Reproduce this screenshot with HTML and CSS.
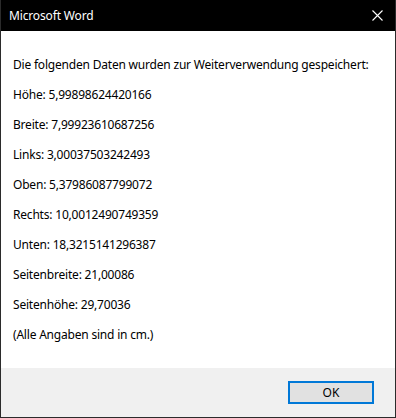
FILE: index.html
```html
<!DOCTYPE html>
<html lang="de">
<head>
    <meta charset="UTF-8">
    <meta name="viewport" content="width=device-width, initial-scale=1.0">
    <link rel="stylesheet" href="styles.css">
    <title>Microsoft Word</title>
</head>
<body>
    <div class="window">
        <!-- Titelleiste -->
        <div class="titlebar">
            <span class="title">Microsoft Word</span>
            <span class="close">
                <svg width="11" height="11" viewBox="0 0 11 11">
                    <path d="M0.5 0.5 L10.5 10.5 M10.5 0.5 L0.5 10.5" stroke="#fff" stroke-width="1.1" fill="none"/>
                </svg>
            </span>
        </div>

        <!-- Meldung -->
        <div class="message">
            <p>Die folgenden Daten wurden zur Weiterverwendung gespeichert:</p>
            <p>Höhe: 5,99898624420166</p>
            <p>Breite: 7,99923610687256</p>
            <p>Links: 3,00037503242493</p>
            <p>Oben: 5,37986087799072</p>
            <p>Rechts: 10,0012490749359</p>
            <p>Unten: 18,3215141296387</p>
            <p>Seitenbreite: 21,00086</p>
            <p>Seitenhöhe: 29,70036</p>
            <p>(Alle Angaben sind in cm.)</p>
        </div>

        <!-- Knopfleiste -->
        <div class="buttons">
            <button class="ok">OK</button>
        </div>
    </div>
</body>
</html>
```

FILE: styles.css
```css
html, body {
    margin: 0;
    padding: 0;
    background-color: #ffffff;
}

body {
    font-family: "Noto Sans", "Open Sans", sans-serif;
    font-size: 12px;
    color: #000000;
}

.window {
    width: 396px;
    height: 418px;
    box-sizing: border-box;
    border: 1px solid #2b2b2b;
    border-top: none;
    display: flex;
    flex-direction: column;
}

/* Titelleiste */
.titlebar {
    height: 31px;
    background-color: #000000;
    color: #ffffff;
    display: flex;
    align-items: center;
    justify-content: space-between;
    padding: 0 12px 0 8px;
    flex-shrink: 0;
}

.title {
    font-size: 12px;
    letter-spacing: -0.15px;
}

.close {
    display: flex;
    align-items: center;
}

/* Meldungstext */
.message {
    flex: 1;
    padding: 19px 12px 0 12px;
    letter-spacing: -0.2px;
}

.message p {
    margin: 0;
    line-height: 30px;
    white-space: nowrap;
}

/* Knopfleiste */
.buttons {
    height: 49px;
    background-color: #f0f0f0;
    display: flex;
    align-items: center;
    justify-content: flex-end;
    padding-right: 21px;
    flex-shrink: 0;
}

.ok {
    width: 86px;
    height: 23px;
    box-sizing: border-box;
    border: 2px solid #0078d7;
    background-color: #e1e1e1;
    font-family: "Noto Sans", "Open Sans", sans-serif;
    font-size: 12px;
    color: #000000;
    padding: 0;
}
```
